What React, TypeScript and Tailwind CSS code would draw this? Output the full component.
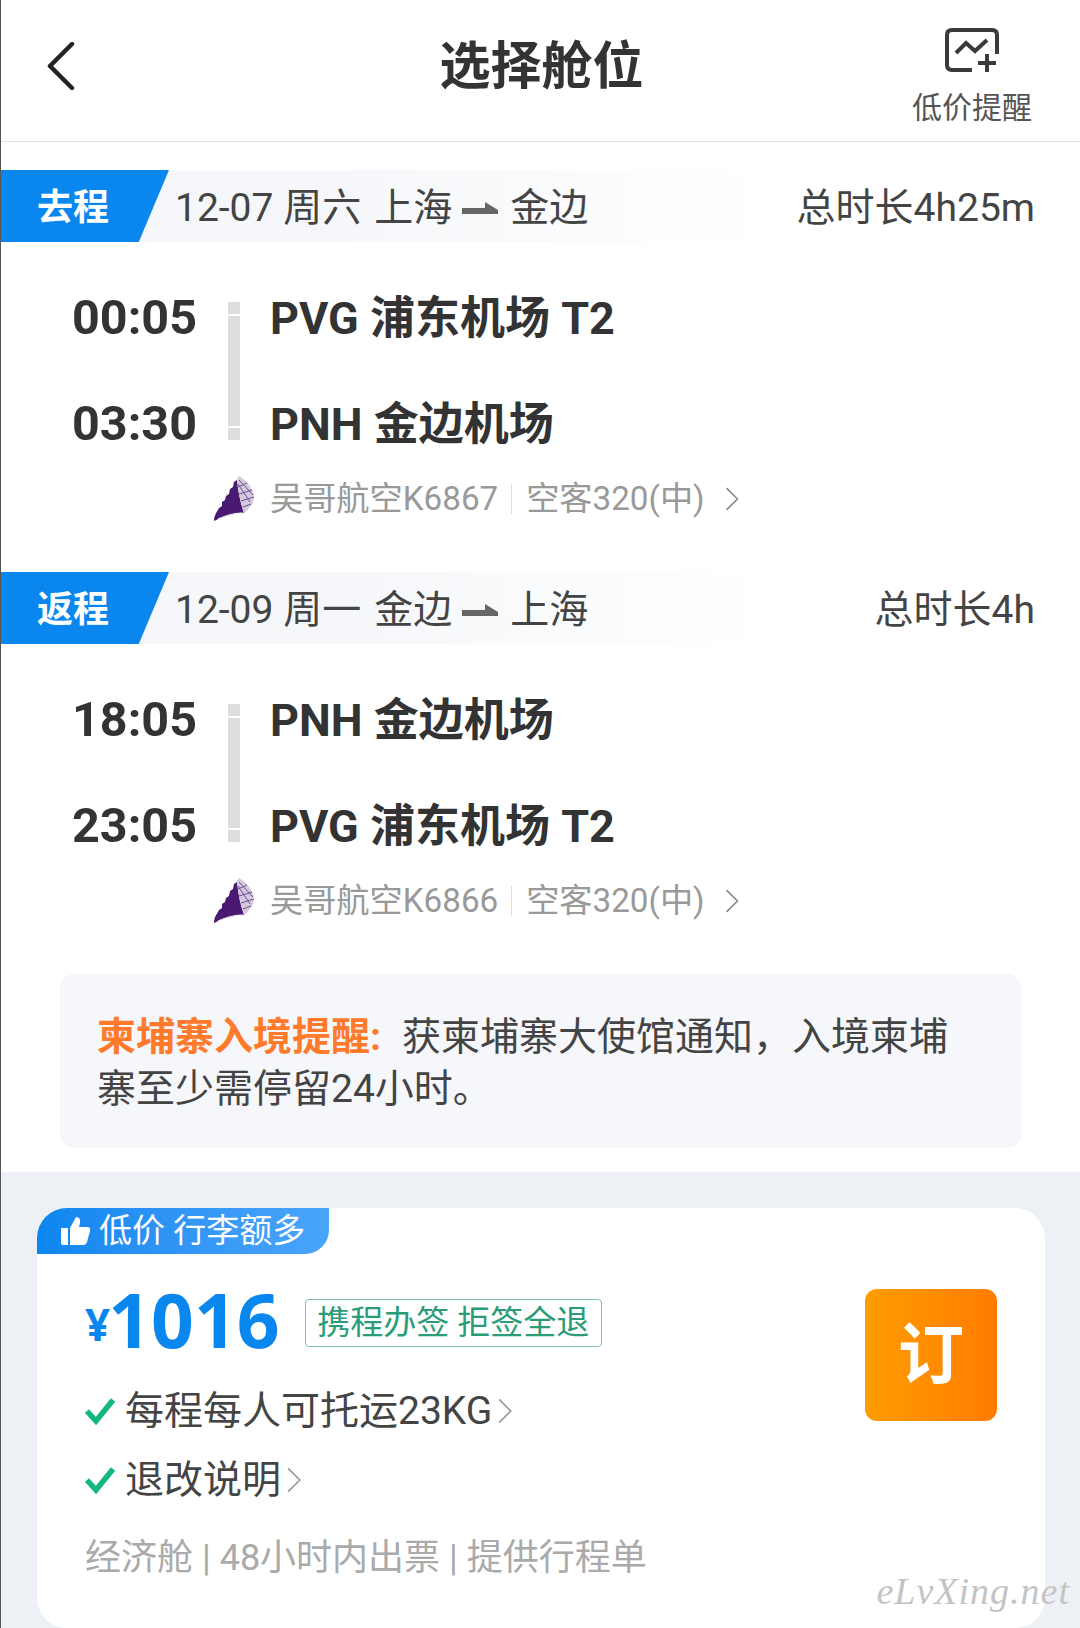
import React from "react";

const FONT = "font-['Roboto','Noto_Sans_CJK_SC',sans-serif]";

function Shell() {
  return (
    <svg width="42" height="46" viewBox="0 0 42 46" className="shrink-0">
      <path d="M1 45 C1 39 4 36 6 32 L9 30 L9 26 L12 24 L13 20 L16 18 L17 13 L20 11 L21 6 L24 4 C25 14 27 26 31 37 C22 37 11 40 1 45 Z" fill="#4a1a72" />
      <path d="M24 3 L26 0 C33 4 41 13 41 21 C41 27 36 33 31 37 C27 26 25 14 24 3 Z" fill="#d4cadd" />
      <path d="M25 8 L37 26 M26 4 L40 19 M25 11 L34 7 M26 18 L39 14 M28 25 L41 21 M30 31 L38 28" stroke="#6f4f90" strokeWidth="1" fill="none" />
      <path d="M5 43 C14 39 22 37 30 37" stroke="#ffffff" strokeWidth="1" fill="none" />
    </svg>
  );
}

function Chevron({ color = "#888888", w = 14, h = 24 }: { color?: string; w?: number; h?: number }) {
  return (
    <svg width={w} height={h} viewBox="0 0 12 22" className="shrink-0">
      <path d="M1 1 L11 11 L1 21" stroke={color} strokeWidth="1.4" fill="none" />
    </svg>
  );
}

function Arrow() {
  return (
    <svg width="36" height="16" viewBox="0 0 36 16" className="shrink-0">
      <path d="M0 7 H23 L23 1 L36 9 V13 H0 Z" fill="#666666" />
    </svg>
  );
}

function Check() {
  return (
    <svg width="30" height="28" viewBox="0 0 30 28" className="shrink-0">
      <path d="M2 14 L11 24 L28 3" stroke="#14b87f" strokeWidth="5.5" fill="none" />
    </svg>
  );
}

function SegmentHead(props: { tag: string; date: string; from: string; to: string; total: string }) {
  return (
    <div className="flex h-[72px] items-center bg-gradient-to-r from-[#f5f7fa] from-[30%] to-white to-[72%] pr-[45px]">
      <div className="flex h-full w-[168px] items-center bg-[#0a86ef] pl-[36px] pt-[4px] [clip-path:polygon(0_0,100%_0,82%_100%,0_100%)]">
        <span className="text-[36px] font-bold text-white">{props.tag}</span>
      </div>
      <div className="ml-[6px] flex items-center pt-[5px] text-[39px] text-[#444444]">
        <span>{props.date}</span>
        <span className="ml-[13px]">{props.from}</span>
        <span className="ml-[10px] mr-[12px]"><Arrow /></span>
        <span>{props.to}</span>
      </div>
      <div className="ml-auto pt-[5px] text-[39px] text-[#444444]">{props.total}</div>
    </div>
  );
}

function Flight(props: { t1: string; a1: string; t2: string; a2: string; line: string }) {
  return (
    <div className="flex flex-col pt-[48px]">
      <div className="flex h-[156px]">
        <div className="flex w-[196px] shrink-0 flex-col items-end text-[48.5px] leading-[56px] font-bold text-[#333333]">
          <div className="flex h-[56px] items-center">{props.t1}</div>
          <div className="mt-[50px] flex h-[56px] items-center">{props.t2}</div>
        </div>
        <div className="ml-[31px] mt-[12px] flex h-[138px] w-[12px] shrink-0 flex-col gap-[2px]">
          <div className="h-[12px] bg-[#dddddd]" />
          <div className="flex-1 bg-[#dddddd]" />
          <div className="h-[12px] bg-[#dddddd]" />
        </div>
        <div className="ml-[30px] flex flex-col pt-[1px] text-[45px] leading-[56px] font-bold text-[#333333]">
          <div className="flex h-[56px] items-center">{props.a1}</div>
          <div className="mt-[50px] flex h-[56px] items-center">{props.a2}</div>
        </div>
      </div>
      <div className="mt-[28px] flex h-[50px] items-center pl-[212px] text-[33.2px] text-[#999999]">
        <Shell />
        <span className="ml-[15px]">{props.line}</span>
        <span className="ml-[13px] mr-[14px] h-[30px] w-px bg-[#dddddd]" />
        <span>空客320(中)</span>
        <span className="ml-[20px]"><Chevron /></span>
      </div>
    </div>
  );
}

export default function App() {
  return (
    <div className={`${FONT} h-[1628px] w-[1080px] overflow-hidden border-l border-[#555555] bg-white`}>
      <header className="flex h-[142px] items-center border-b border-[#e2e2e2] pl-[46px] pr-[48px]">
        <svg width="28" height="48" viewBox="0 0 28 48" className="mb-[10px] shrink-0">
          <path d="M25 2 L3 24 L25 46" stroke="#222222" strokeWidth="4.5" fill="none" strokeLinecap="round" strokeLinejoin="round" />
        </svg>
        <div className="flex-1 pb-[7px] pl-[96px] text-center text-[51px] font-bold text-[#333333]">选择舱位</div>
        <div className="flex flex-col items-center self-start pt-[28px]">
          <svg width="54" height="46" viewBox="0 0 54 46" className="shrink-0">
            <path d="M27 42 H7 Q2 42 2 37 V7 Q2 2 7 2 H47 Q52 2 52 7 V26" stroke="#3a3a3a" strokeWidth="4" fill="none" />
            <path d="M11 25 L21 15 L30 23 L42 12" stroke="#3a3a3a" strokeWidth="4" fill="none" />
            <path d="M42 26 V44 M33 35 H51" stroke="#3a3a3a" strokeWidth="4" fill="none" />
          </svg>
          <div className="mt-[14px] text-[30px] leading-[40px] text-[#555555]">低价提醒</div>
        </div>
      </header>

      <div className="h-[28px]" />
      <SegmentHead tag="去程" date="12-07 周六" from="上海" to="金边" total="总时长4h25m" />
      <Flight t1="00:05" a1="PVG 浦东机场 T2" t2="03:30" a2="PNH 金边机场" line="吴哥航空K6867" />

      <div className="h-[48px]" />
      <SegmentHead tag="返程" date="12-09 周一" from="金边" to="上海" total="总时长4h" />
      <Flight t1="18:05" a1="PNH 金边机场" t2="23:05" a2="PVG 浦东机场 T2" line="吴哥航空K6866" />

      <div className="mx-[59px] mt-[48px] flex h-[174px] flex-col justify-center rounded-[14px] bg-[#f5f7fa] px-[37px] pt-[4px] text-[39px] leading-[52px] text-[#444444]">
        <div>
          <span className="font-bold text-[#ff7a2b]">柬埔寨入境提醒:</span>
          <span className="ml-[21px]">获柬埔寨大使馆通知，入境柬埔</span>
          <br />
          <span>寨至少需停留24小时。</span>
        </div>
      </div>

      <div className="relative mt-[24px] h-[456px] bg-[#edf1f5] pl-[36px] pr-[35px] pt-[36px]">
        <div className="h-[420px] rounded-[30px] bg-white">
          <div className="flex h-[46px] w-[292px] items-center rounded-tl-[30px] rounded-br-[24px] bg-gradient-to-r from-[#0a86ef] to-[#4aa5fb] pl-[24px] text-[33px] text-white">
            <svg width="30" height="30" viewBox="0 0 30 30" className="shrink-0">
              <path d="M0 12 H7 V29 H2 Q0 29 0 27 Z" fill="#ffffff" />
              <path d="M9 12 L15 1 Q20 1 19 7 L18 11 H26 Q30 11 29 15 L26 26 Q25 29 22 29 H9 Z" fill="#ffffff" />
            </svg>
            <span className="ml-[8px]">低价 行李额多</span>
          </div>

          <div className="flex pl-[48px] pr-[48px]">
            <div className="flex-1">
              <div className="mt-[27px] flex h-[76px] items-center">
                <span className="mt-[10px] font-['Noto_Sans',sans-serif] text-[44px] leading-none font-bold text-[#0a86ef]">¥</span>
                <span className="-ml-[2px] font-['Noto_Sans',sans-serif] text-[75px] leading-none font-bold text-[#0a86ef]">1016</span>
                <span className="ml-[25px] mt-[8px] flex h-[48px] w-[297px] items-center justify-center rounded-[4px] border border-[#7fbfb0] text-[33px] text-[#2a9d78]">携程办签 拒签全退</span>
              </div>
              <div className="mt-[29px] flex h-[50px] items-center text-[39px] text-[#444444]">
                <Check />
                <span className="ml-[10px]">每程每人可托运23KG</span>
                <span className="ml-[6px]"><Chevron color="#999999" w={14} h={26} /></span>
              </div>
              <div className="mt-[19px] flex h-[50px] items-center text-[39px] text-[#444444]">
                <Check />
                <span className="ml-[10px]">退改说明</span>
                <span className="ml-[6px]"><Chevron color="#999999" w={14} h={26} /></span>
              </div>
              <div className="mt-[28px] text-[36px] leading-[50px] text-[#aaaaaa]">经济舱 | 48小时内出票 | 提供行程单</div>
            </div>
            <div className="mt-[35px] flex h-[132px] w-[132px] shrink-0 items-center justify-center rounded-[12px] bg-gradient-to-r from-[#ff9d00] to-[#ff7b00] text-[66px] font-bold text-white">订</div>
          </div>
        </div>
        <div className="absolute right-[10px] bottom-[8px] font-['Liberation_Serif',serif] text-[38px] tracking-[1px] text-[#c4c4c4] italic">eLvXing.net</div>
      </div>
    </div>
  );
}
